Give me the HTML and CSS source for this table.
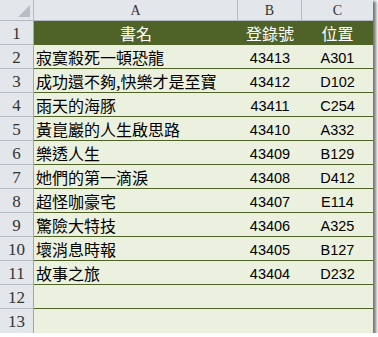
FILE: index.html
```html
<!DOCTYPE html>
<html>
<head>
<meta charset="utf-8">
<link rel="stylesheet" href="styles.css">
</head>
<body>
<div class="sheet">
  <div class="hd corner"><span class="tri"></span></div>
  <div class="hd col">A</div>
  <div class="hd col">B</div>
  <div class="hd col last">C</div>

  <div class="hd rn">1</div>
  <div class="th">書名</div>
  <div class="th">登錄號</div>
  <div class="th">位置</div>

  <div class="hd rn">2</div><div class="td t">寂寞殺死一頓恐龍</div><div class="td n">43413</div><div class="td n">A301</div>
  <div class="hd rn">3</div><div class="td t">成功還不夠,快樂才是至寶</div><div class="td n">43412</div><div class="td n">D102</div>
  <div class="hd rn">4</div><div class="td t">雨天的海豚</div><div class="td n">43411</div><div class="td n">C254</div>
  <div class="hd rn">5</div><div class="td t">黃崑巖的人生啟思路</div><div class="td n">43410</div><div class="td n">A332</div>
  <div class="hd rn">6</div><div class="td t">樂透人生</div><div class="td n">43409</div><div class="td n">B129</div>
  <div class="hd rn">7</div><div class="td t">她們的第一滴淚</div><div class="td n">43408</div><div class="td n">D412</div>
  <div class="hd rn">8</div><div class="td t">超怪咖豪宅</div><div class="td n">43407</div><div class="td n">E114</div>
  <div class="hd rn">9</div><div class="td t">驚險大特技</div><div class="td n">43406</div><div class="td n">A325</div>
  <div class="hd rn">10</div><div class="td t">壞消息時報</div><div class="td n">43405</div><div class="td n">B127</div>
  <div class="hd rn">11</div><div class="td t">故事之旅</div><div class="td n">43404</div><div class="td n">D232</div>
  <div class="hd rn">12</div><div class="td t"></div><div class="td n"></div><div class="td n"></div>
  <div class="hd rn lastrow">13</div><div class="td t lastrow"></div><div class="td n lastrow"></div><div class="td n lastrow"></div>
</div>
</body>
</html>
```

FILE: styles.css
```css
html, body {
  margin: 0;
  padding: 0;
  background: #ffffff;
}
.sheet {
  display: grid;
  grid-template-columns: 34px 204px 64px 71px;
  grid-template-rows: 21px repeat(13, 24px);
  width: 373px;
  box-shadow: 2px 2px 3px 1px rgba(0, 0, 0, 0.55);
  background: #ebf1de;
}
.sheet > div {
  box-sizing: border-box;
  display: flex;
  align-items: center;
  overflow: hidden;
  white-space: nowrap;
}
.hd {
  background: #e3e6eb;
  color: #333;
  font-family: "Liberation Serif", serif;
  justify-content: center;
  border-bottom: 1px solid #b4bac3;
  border-right: 1px solid #b4bac3;
}
.corner {
  position: relative;
}
.tri {
  position: absolute;
  right: 3px;
  bottom: 3px;
  width: 0;
  height: 0;
  border-left: 12px solid transparent;
  border-bottom: 12px solid #b9bdc3;
}
.col {
  font-size: 14px;
  padding-top: 1px;
}
.col.last {
  border-right: none;
}
.rn {
  font-size: 17px;
  padding-top: 2px;
  border-right-color: #a0a7b1;
}
.rn.lastrow {
  border-bottom: none;
}
.th {
  background: #4f6228;
  color: #ffffff;
  font-family: "Noto Sans CJK TC", sans-serif;
  font-size: 16px;
  justify-content: center;
  border-bottom: 1px solid #4f6228;
}
.td {
  border-bottom: 1px solid #4f6228;
}
.td.lastrow {
  border-bottom: none;
}
.t {
  font-family: "Noto Sans CJK TC", sans-serif;
  font-size: 16px;
  color: #000;
  padding-left: 2px;
}
.n {
  font-family: "Liberation Sans", Arial, sans-serif;
  font-size: 14.5px;
  color: #000;
  justify-content: center;
  padding-top: 2px;
}
```
